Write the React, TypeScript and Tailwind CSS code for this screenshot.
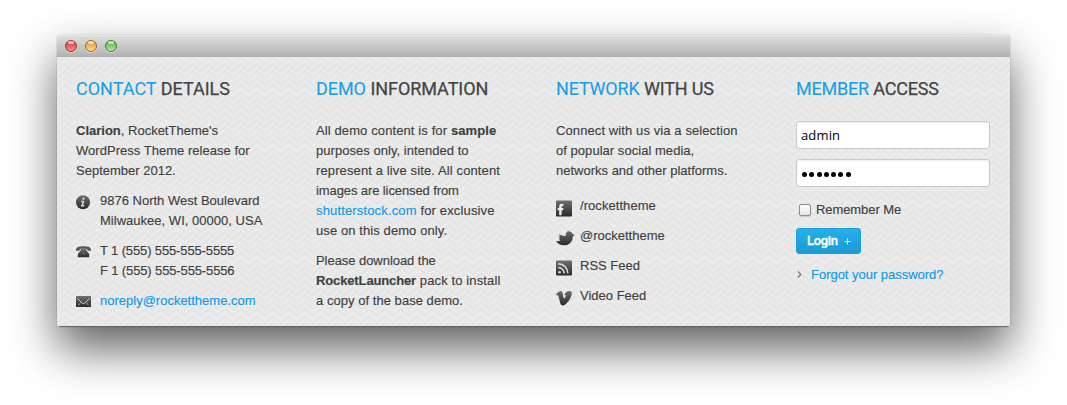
import React from "react";

const DARK = "url(#ink)";

function Title({ first, rest, tracking = "" }: { first: string; rest: string; tracking?: string }) {
  return (
    <h2 className={`h-[25px] whitespace-nowrap font-[Roboto,sans-serif] text-[18px] leading-[23px] text-[#444] [-webkit-text-stroke:0.25px_currentColor] ${tracking}`}>
      <span className="text-[#1a9fe4] [-webkit-text-stroke:0.1px_currentColor]">{first}</span> {rest}
    </h2>
  );
}

function Line({ children, className = "" }: { children: React.ReactNode; className?: string }) {
  return <span className={`block whitespace-nowrap [-webkit-text-stroke:0.15px_currentColor] ${className}`}>{children}</span>;
}

function Entry({ icon, children, className = "" }: { icon: React.ReactNode; children: React.ReactNode; className?: string }) {
  return (
    <li className={`flex ${className}`}>
      <span className="w-6 shrink-0">{icon}</span>
      <div>{children}</div>
    </li>
  );
}

function InfoIcon() {
  return (
    <svg className="mt-[4px] block" width="15" height="15" viewBox="0 0 15 15">
      <circle cx="7" cy="7.2" r="7" fill={DARK} />
      <path d="M6.600 2.800h2.100l-.4 1.900H6.200zM5.200 5.700h3L7.400 10.100h.9l-.3 1.300H4.800l.3-1.300h.6l.6-3.200H4.900z" fill="#d4d4d4" />
    </svg>
  );
}
function PhoneIcon() {
  return (
    <svg className="mt-[4.500px] block" width="15" height="12" viewBox="0 0 15 12">
      <path d="M0 3.800C0 1.400 2.800.3 7.500.3S15 1.400 15 3.800v1h-3.600V3.300C9.500 2.700 5.500 2.700 3.600 3.300v1.500H0z" fill="#555" />
      <path d="M4.800 3h5.400v1.200l3 3.800v3.200H1.800V8l3-3.800z" fill={DARK} />
      <circle cx="7.500" cy="7" r="1.500" fill="#606060" />
    </svg>
  );
}
function MailIcon() {
  return (
    <svg className="mt-[5px] block" width="15" height="11" viewBox="0 0 15 11">
      <rect width="15" height="11" rx=".5" fill={DARK} />
      <path d="M1.500 2.500l4.700 4.600q1.300.9 2.600 0L13.500 2.500M2.500 9l1.900-1.800M12.500 9l-1.900-1.800" fill="none" stroke="#cfcfcf" strokeWidth="1" />
    </svg>
  );
}
function FacebookIcon() {
  return (
    <svg className="mt-[4px] block" width="16" height="17" viewBox="0 0 16 17">
      <rect y=".5" width="16" height="16" rx="1" fill={DARK} />
      <path d="M1.700 8h1.500V6.500C3.200 4.500 4.300 3.700 6 3.700h1.400v2.200h-.8c-.7 0-1 .300-1 .9V8h1.800l-.3 2.200H5.600v5H3.200v-5H1.700z" fill="#eee" />
    </svg>
  );
}
function TwitterIcon() {
  return (
    <svg className="mt-[4px] block" width="19" height="16" viewBox="0 0 19 16">
      <path d="M0 11.300C1.900 11.400 3.200 11 4.300 10.200L2.700 8.800 4 8.600 2.400 6.600 4 6.700 3 4C5.500 5.600 7.500 6 9.500 6 9.700 3 11 1.500 12.300.7l-.1 1L14 .6l-.3 1.200C15.300 1.800 16.200 2.600 16.600 4L18.800 5.300 16.800 6.400C17 10.500 14 15.200 8.500 15.300 4.600 15.400 2 14 0 11.300z" fill={DARK} />
    </svg>
  );
}
function RssIcon() {
  return (
    <svg className="mt-[4px] block" width="16" height="16" viewBox="0 0 16 16">
      <rect y=".5" width="16" height="15" rx="1" fill={DARK} />
      <circle cx="3.600" cy="12.300" r="1.300" fill="#ddd" />
      <path d="M2.200 7.500a6 6 0 0 1 6 6M2.200 3.800a9.700 9.700 0 0 1 9.700 9.700" fill="none" stroke="#ddd" strokeWidth="1.500" />
    </svg>
  );
}
function VimeoIcon() {
  return (
    <svg className="mt-[4px] block" width="16" height="16" viewBox="0 0 16 16">
      <path d="M0 4.200C1.300 2.800 3 1.100 4.500.900c1.800-.1 2.100 1.500 2.500 3.800.3 2 .6 3.800 1.200 3.800.600 0 1.600-1.800 1.600-2.800 0-.9-.7-.9-1.500-.6C9 2.500 10.800.9 13.300.900c2 0 2.700 1.200 2.500 3.100-.4 3.800-4.300 9.300-7.300 11-2.200 1-3.700.1-4.300-1.900L2.500 6.500C2.200 5.400 1.800 5 .7 5.600z" fill={DARK} />
    </svg>
  );
}

function Light({ className }: { className: string }) {
  return (
    <span className={`relative block size-[12px] rounded-full border shadow-[0_1px_0_rgba(255,255,255,0.5)] ${className}`}>
      <span className="absolute left-[2px] top-0 h-[3px] w-[6px] rounded-full bg-white/60" />
    </span>
  );
}

function Texture() {
  return (
    <svg className="absolute inset-0 size-full" aria-hidden="true">
      <defs>
        <linearGradient id="ink" x1="0" y1="0" x2="0" y2="1">
          <stop offset="0" stopColor="#707070" />
          <stop offset="1" stopColor="#2a2a2a" />
        </linearGradient>
        <pattern id="weave" width="16" height="7" patternUnits="userSpaceOnUse">
          <path d="M-1-1L0 0 8-7l8 7 1-1M-1 6l1 1 8-7 8 7 1-1M-1 13l1 1 8-7 8 7 1-1" fill="none" stroke="#e4e4e4" strokeWidth="1.300" />
          <path d="M0 3.500l8-7 8 7M0 10.500l8-7 8 7" fill="none" stroke="#ececec" strokeWidth="1.300" />
        </pattern>
      </defs>
      <rect width="100%" height="100%" fill="url(#weave)" />
    </svg>
  );
}

const link = "text-[#1199e6]";

export default function App() {
  return (
    <div className="h-[405px] w-[1067px] overflow-hidden bg-white pl-[57px] pt-[35px] font-['Liberation_Sans',Arial,sans-serif] text-[13px] leading-5 text-[#3f3f3f]">
      <div className="flex h-[292px] w-[953px] flex-col overflow-hidden rounded-[4px] shadow-[0_22px_46px_rgba(0,0,0,0.62),0_0_1px_rgba(0,0,0,0.6)]">
        <header className="flex h-[22px] shrink-0 items-center gap-2 border-b border-[#b0b0b0] border-t border-t-[#e8e8e8] bg-linear-to-b from-[#dedede] to-[#b4b4b4] pl-2">
          <Light className="border-[#94383a] bg-linear-to-b from-[#c63a40] to-[#ff8a86]" />
          <Light className="border-[#96672c] bg-linear-to-b from-[#d8922f] to-[#ffe08a]" />
          <Light className="border-[#437d35] bg-linear-to-b from-[#5aa545] to-[#b5ec98]" />
        </header>
        <main className="relative flex-1 border-b border-[#666] bg-[#e9e9e9]">
          <Texture />
          <div className="relative grid grid-cols-[240px_240px_240px_194px] pl-[19px] pt-[20px]">
            <section>
              <Title first="CONTACT" rest="DETAILS" />
              <p className="mt-[19px]">
                <Line><b>Clarion</b>, RocketTheme's</Line>
                <Line className="tracking-[0.03px]">WordPress Theme release for</Line>
                <Line>September 2012.</Line>
              </p>
              <ul className="mt-[10px] flex flex-col gap-[10px]">
                <Entry icon={<InfoIcon />}>
                  <Line>9876 North West Boulevard</Line>
                  <Line className="tracking-[0.02px]">Milwaukee, WI, 00000, USA</Line>
                </Entry>
                <Entry icon={<PhoneIcon />}>
                  <Line className="tracking-[-0.13px]">T 1 (555) 555-555-5555</Line>
                  <Line className="tracking-[-0.13px]">F 1 (555) 555-555-5556</Line>
                </Entry>
                <Entry icon={<MailIcon />}>
                  <Line className={link}>noreply@rockettheme.com</Line>
                </Entry>
              </ul>
            </section>
            <section>
              <Title first="DEMO" rest="INFORMATION" tracking="tracking-[-0.05px]" />
              <p className="mt-[19px]">
                <Line className="tracking-[0.11px]">All demo content is for <b>sample</b></Line>
                <Line className="tracking-[0.04px]">purposes only, intended to</Line>
                <Line className="tracking-[0.12px]">represent a live site. All content</Line>
                <Line className="tracking-[-0.1px]">images are licensed from</Line>
                <Line className="tracking-[0.15px]"><a className={link}>shutterstock.com</a> for exclusive</Line>
                <Line className="tracking-[0.09px]">use on this demo only.</Line>
              </p>
              <p className="mt-[10px]">
                <Line className="tracking-[-0.05px]">Please download the</Line>
                <Line className="tracking-[0.13px]"><b className="tracking-[-0.13px]">RocketLauncher</b> pack to install</Line>
                <Line className="tracking-[0.04px]">a copy of the base demo.</Line>
              </p>
            </section>
            <section>
              <Title first="NETWORK" rest="WITH US" tracking="tracking-[-0.18px]" />
              <p className="mt-[19px]">
                <Line className="tracking-[0.1px]">Connect with us via a selection</Line>
                <Line className="tracking-[0.04px]">of popular social media,</Line>
                <Line>networks and other platforms.</Line>
              </p>
              <ul className="mt-[15px] flex flex-col gap-[10px]">
                <Entry className="h-5" icon={<FacebookIcon />}><Line className="tracking-[0.06px]">/rockettheme</Line></Entry>
                <Entry className="h-5" icon={<TwitterIcon />}><Line>@rockettheme</Line></Entry>
                <Entry className="h-5" icon={<RssIcon />}><Line>RSS Feed</Line></Entry>
                <Entry className="h-5" icon={<VimeoIcon />}><Line>Video Feed</Line></Entry>
              </ul>
            </section>
            <section>
              <Title first="MEMBER" rest="ACCESS" tracking="tracking-[-0.2px]" />
              <div className="mt-[19px] flex h-[28px] items-center rounded-[3px] border border-[#c8c8c8] bg-white pl-1 font-['Open_Sans',sans-serif] text-[13px] tracking-[0.15px] text-black shadow-[inset_0_1px_2px_rgba(0,0,0,0.07)]">
                admin
              </div>
              <div className="mt-[10px] flex h-[28px] items-center gap-[2px] rounded-[3px] border border-[#c8c8c8] bg-white pl-[5px] pt-[2px] shadow-[inset_0_1px_2px_rgba(0,0,0,0.07)]">
                {[0, 1, 2, 3, 4, 5, 6].map((i) => (
                  <span key={i} className="mr-[0.3px] size-[5px] rounded-full bg-black" />
                ))}
              </div>
              <label className="mt-[13px] flex h-5 items-center">
                <span className="ml-[3px] mr-[5px] block size-[12px] rounded-[2px] border border-[#8c8c8c] bg-linear-to-b from-white to-[#e4e4e4] shadow-[0_1px_1px_rgba(0,0,0,0.15)]" />
                <Line className="tracking-[-0.08px]">Remember Me</Line>
              </label>
              <button className="mt-[8px] flex h-[26px] w-[65px] items-center rounded-[3px] border border-[#1b9fd8] bg-linear-to-b from-[#24b0ec] to-[#1b9ad3] pl-[10px] font-[Roboto,sans-serif] text-[13px] font-medium tracking-[-0.35px] text-white [-webkit-text-stroke:0.3px_currentColor]">
                Login
                <svg className="ml-[6px] mt-px" width="7" height="7" viewBox="0 0 7 7">
                  <path d="M3.500.5v6M.5 3.500h6" stroke="#c9ecfb" strokeWidth="1" />
                </svg>
              </button>
              <div className="mt-[11px] flex h-5 items-center">
                <svg className="-mt-px ml-px mr-[9px]" width="5" height="7" viewBox="0 0 5 7">
                  <path d="M1 .5l2.800 3L1 6.500" fill="none" stroke="#777" strokeWidth="1.200" />
                </svg>
                <Line className="text-[#1199e6] tracking-[-0.02px]">Forgot your password?</Line>
              </div>
            </section>
          </div>
        </main>
      </div>
    </div>
  );
}
